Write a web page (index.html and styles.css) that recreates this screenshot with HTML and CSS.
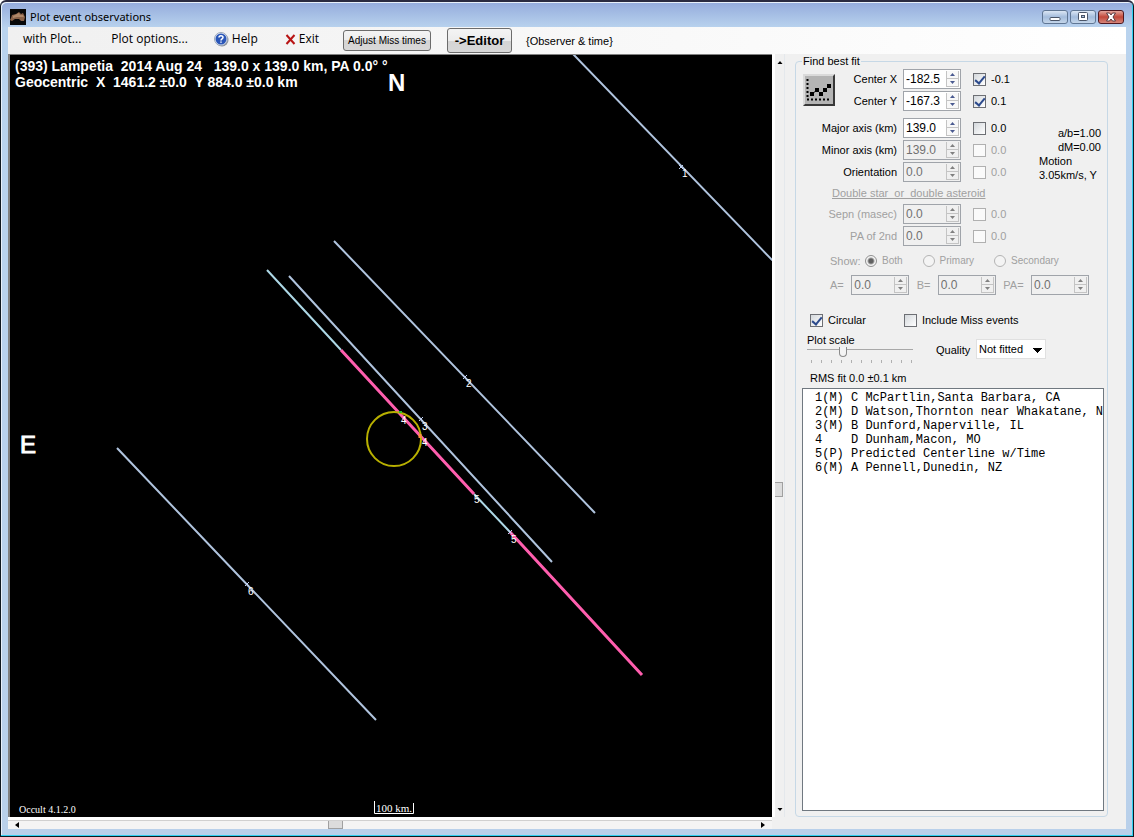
FILE: index.html
```html
<!DOCTYPE html>
<html lang="en">
<head>
<meta charset="utf-8">
<title>Plot event observations</title>
<link rel="stylesheet" href="styles.css">
</head>
<body>
<svg class="defs" width="0" height="0" aria-hidden="true">
  <symbol id="up" viewBox="0 0 5 3"><path d="M0 3 2.500 0 5 3z" fill="currentColor"/></symbol>
  <symbol id="down" viewBox="0 0 5 3"><path d="M0 0 2.500 3 5 0z" fill="currentColor"/></symbol>
</svg>
<div class="window">
  <header class="titlebar">
    <svg class="app-icon" viewBox="0 0 16 16"><rect width="16" height="16" fill="#080808"/><path d="M1 9 2 6l4-1 3-2 2 2 2-1 2 4-1 4-3 0-2-2-4 0-3 2-2-1z" fill="#8a6248"/><path d="M3 7l4-2 2-1 1 2 3 0 1 2-3 0-4 0-4 1z" fill="#b08868"/></svg>
    <h1>Plot event observations</h1>
    <div class="win-buttons">
      <button aria-label="Minimize"><svg width="12" height="12"><rect x="1" y="6.500" width="10" height="3" rx="1" fill="#fff" stroke="#4a5568"/></svg></button>
      <button aria-label="Restore"><svg width="12" height="12"><rect x="1.500" y="1.500" width="9" height="8" rx="1" fill="#fff" stroke="#4a5568"/><rect x="4.500" y="4.500" width="3" height="2" fill="#a9bfdd" stroke="#4a5568"/></svg></button>
      <button class="close" aria-label="Close"><svg width="12" height="12"><path d="M1.500 2h3L6 4l1.500-2h3L8 6l2.500 4h-3L6 8l-1.500 2h-3L4 6z" fill="#fff" stroke="#5a3a40"/></svg></button>
    </div>
  </header>

  <nav class="toolbar">
    <button class="menu">with Plot...</button>
    <button class="menu options">Plot options...</button>
    <button class="menu help"><svg width="15" height="15" viewBox="0 0 15 15"><circle cx="8" cy="8" r="6.500" fill="#8a9098"/><circle cx="7" cy="7" r="6.500" fill="#e6ecf6" stroke="#9aa6b8"/><circle cx="7" cy="7" r="5.500" fill="#2a56b8"/><path d="M5 5.500C5 3.200 9 3.200 9 5.400 9 6.800 7 6.800 7 8.400M7 9.500v1.300" fill="none" stroke="#fff" stroke-width="1.500"/></svg>Help</button>
    <button class="menu exit"><svg width="11" height="11" viewBox="0 0 11 11"><path d="M1.500 1 9.500 10M9.500 1 1.500 10" stroke="#b81414" stroke-width="2"/></svg>Exit</button>
    <button class="push adjust">Adjust Miss times</button>
    <button class="push editor">-&gt;Editor</button>
    <span class="note">{Observer &amp; time}</span>
  </nav>

  <main class="work">
    <section class="plot-area" aria-label="Plot">
      <svg class="plot">
        <g transform="translate(-10 -55)">
          <g class="chord">
            <path d="M573 54 774 262M334 241 595 513M289 276 552 562M117 448 376 720"/>
            <path class="cyan" d="M267 270 341 350M474 494 510 532"/>
            <path class="pink" d="M341 350 474 494M510 532 642 675"/>
          </g>
          <circle class="body" cx="394" cy="439" r="27"/>
          <path d="M399 412h3" stroke="#30c030" stroke-width="2"/>
          <path d="M420 434v4" stroke="#ff9040" stroke-width="3"/>
          <path class="mark" d="M679 165l4 4m0-4-4 4M463 375l4 4m0-4-4 4M419 417l4 4m0-4-4 4M245 582l4 4m0-4-4 4M508 530l4 4m0-4-4 4"/>
          <g class="num">
            <text x="682" y="177">1</text><text x="466" y="387">2</text><text x="422" y="430">3</text>
            <text x="401" y="424">4</text><text x="422" y="446">4</text><text x="474" y="503">5</text>
            <text x="511" y="543">5</text><text x="248" y="595">6</text>
          </g>
          <g class="info">
            <text x="15" y="71">(393) Lampetia  2014 Aug 24   139.0 x 139.0 km, PA 0.0° °</text>
            <text x="15" y="87">Geocentric  X  1461.2 ±0.0  Y 884.0 ±0.0 km</text>
          </g>
          <g class="compass"><text x="388" y="91">N</text><text class="east" x="20" y="453">E</text></g>
          <text class="version" x="19" y="813">Occult 4.1.2.0</text>
          <text class="scale" x="376" y="812">100 km.</text>
          <path d="M374.500 801v12.500h39V803" fill="none" stroke="#fff"/>
        </g>
      </svg>
    </section>

    <div class="vscroll">
      <button aria-label="Scroll up"><svg width="6" height="3"><use href="#up"/></svg></button>
      <div class="vthumb"></div>
      <button aria-label="Scroll down"><svg width="6" height="3"><use href="#down"/></svg></button>
    </div>
    <div class="hscroll">
      <button aria-label="Scroll left"><svg width="4" height="6"><path d="M4 0 0 3l4 3z"/></svg></button>
      <div class="hthumb"></div>
      <button aria-label="Scroll right"><svg width="4" height="6"><path d="M0 0 4 3 0 6z"/></svg></button>
    </div>

    <fieldset class="fit">
      <legend>Find best fit</legend>
      <div class="params">
        <button class="chart" aria-label="Fit"><svg width="28" height="28" viewBox="0 0 28 28"><path d="M2.500 3v19" stroke="#000" stroke-width="2" stroke-dasharray="2 2"/><path d="M2 23.500h22" stroke="#000" stroke-width="2" stroke-dasharray="2 2"/><path d="M7 18 12 14l4 4 4-4 4-4" fill="none" stroke="#000"/><path d="M5 16h4v4H5zM10 12h4v4h-4zM14 16h4v4h-4zM18 12h4v4h-4zM22 8h4v4h-4z"/></svg></button>
        <label class="name short" for="cx">Center X</label>
        <span class="spin"><input id="cx" value="-182.5"><button aria-label="Up"><svg><use href="#up"/></svg></button><button aria-label="Down"><svg><use href="#down"/></svg></button></span>
        <label class="check"><input type="checkbox" checked>-0.1</label>

        <label class="name short" for="cy">Center Y</label>
        <span class="spin"><input id="cy" value="-167.3"><button aria-label="Up"><svg><use href="#up"/></svg></button><button aria-label="Down"><svg><use href="#down"/></svg></button></span>
        <label class="check"><input type="checkbox" checked>0.1</label>

        <div class="space"></div>

        <label class="name" for="maj">Major axis (km)</label>
        <span class="spin"><input id="maj" value="139.0"><button aria-label="Up"><svg><use href="#up"/></svg></button><button aria-label="Down"><svg><use href="#down"/></svg></button></span>
        <label class="check"><input type="checkbox">0.0</label>

        <label class="name" for="min">Minor axis (km)</label>
        <span class="spin"><input id="min" value="139.0" disabled><button aria-label="Up" disabled><svg><use href="#up"/></svg></button><button aria-label="Down" disabled><svg><use href="#down"/></svg></button></span>
        <label class="check off"><input type="checkbox" disabled>0.0</label>

        <label class="name" for="ori">Orientation</label>
        <span class="spin"><input id="ori" value="0.0" disabled><button aria-label="Up" disabled><svg><use href="#up"/></svg></button><button aria-label="Down" disabled><svg><use href="#down"/></svg></button></span>
        <label class="check off"><input type="checkbox" disabled>0.0</label>

        <div class="facts"><p class="right">a/b=1.00<br>dM=0.00</p><p>Motion<br>3.05km/s, Y</p></div>

        <div class="double">Double star&nbsp; or&nbsp; double asteroid</div>

        <label class="name off" for="sep">Sepn (masec)</label>
        <span class="spin"><input id="sep" value="0.0" disabled><button aria-label="Up" disabled><svg><use href="#up"/></svg></button><button aria-label="Down" disabled><svg><use href="#down"/></svg></button></span>
        <label class="check off"><input type="checkbox" disabled>0.0</label>

        <label class="name off" for="pa2">PA of 2nd</label>
        <span class="spin"><input id="pa2" value="0.0" disabled><button aria-label="Up" disabled><svg><use href="#up"/></svg></button><button aria-label="Down" disabled><svg><use href="#down"/></svg></button></span>
        <label class="check off"><input type="checkbox" disabled>0.0</label>
      </div>

      <div class="show off">
        <span>Show:</span>
        <label><input type="radio" name="show" checked disabled>Both</label>
        <label><input type="radio" name="show" disabled>Primary</label>
        <label><input type="radio" name="show" disabled>Secondary</label>
      </div>

      <div class="axes off">
        <label for="a">A=</label>
        <span class="spin"><input id="a" value="0.0" disabled><button aria-label="Up" disabled><svg><use href="#up"/></svg></button><button aria-label="Down" disabled><svg><use href="#down"/></svg></button></span>
        <label for="b">B=</label>
        <span class="spin"><input id="b" value="0.0" disabled><button aria-label="Up" disabled><svg><use href="#up"/></svg></button><button aria-label="Down" disabled><svg><use href="#down"/></svg></button></span>
        <label for="pa">PA=</label>
        <span class="spin"><input id="pa" value="0.0" disabled><button aria-label="Up" disabled><svg><use href="#up"/></svg></button><button aria-label="Down" disabled><svg><use href="#down"/></svg></button></span>
      </div>

      <div class="flags">
        <label class="check"><input type="checkbox" checked>Circular</label>
        <label class="check"><input type="checkbox">Include Miss events</label>
      </div>

      <div class="tuning">
        <div class="zoom">
          <label for="zoom">Plot scale</label>
          <input id="zoom" type="range" min="0" max="100" value="33">
          <div class="ticks"></div>
        </div>
        <label class="quality-label" for="quality">Quality</label>
        <select id="quality" class="quality"><option>Not fitted</option></select>
      </div>

      <label class="rms" for="observers">RMS fit 0.0 ±0.1 km</label>
      <select id="observers" class="observers" size="6">
        <option>1(M)&nbsp;C&nbsp;McPartlin,Santa&nbsp;Barbara,&nbsp;CA</option>
        <option>2(M)&nbsp;D&nbsp;Watson,Thornton&nbsp;near&nbsp;Whakatane,&nbsp;NZ</option>
        <option>3(M)&nbsp;B&nbsp;Dunford,Naperville,&nbsp;IL</option>
        <option>4&nbsp;&nbsp;&nbsp;&nbsp;D&nbsp;Dunham,Macon,&nbsp;MO</option>
        <option>5(P)&nbsp;Predicted&nbsp;Centerline&nbsp;w/Time</option>
        <option>6(M)&nbsp;A&nbsp;Pennell,Dunedin,&nbsp;NZ</option>
      </select>
    </fieldset>
  </main>
</div>
</body>
</html>
```

FILE: styles.css
```css
* { box-sizing: border-box; }
body { margin: 0; font: 11px/14px "Liberation Sans", sans-serif; color: #000; }
button, input, select { font: inherit; color: inherit; margin: 0; padding: 0; border-radius: 0; }
button { border: 0; background: none; }
.defs { position: absolute; }

.window {
  display: flex; flex-direction: column; min-height: 100vh;
  padding: 1px 7px 7px; border: 1px solid #101820; border-top: 2px solid #2a2a40;
  border-radius: 6px 6px 0 0;
  background: linear-gradient(#94abdc, #b9d3ee 26px, #b9d0ea);
  box-shadow: inset -1px -1px 0 #30d0f0, inset 1px 1px 0 #e8f0fa;
}

/* Title bar */
.titlebar { display: flex; align-items: center; height: 24px; padding: 4px 2px 0; flex: none; }
.app-icon { width: 16px; height: 16px; margin-right: 4px; }
h1 { margin: 0; flex: 1; font: 11px/16px "Noto Sans", sans-serif; }
.win-buttons { display: flex; gap: 2px; }
.win-buttons button {
  display: grid; place-items: center; width: 26px; height: 14px;
  border: 1px solid #5f7694; border-radius: 3px; background: linear-gradient(#dbe6f4, #a3bcdc 50%, #c4d6ea);
}
.win-buttons .close { border-color: #501820; background: linear-gradient(#e4a69c, #c2483a 50%, #d6857a); }

/* Toolbar */
.toolbar { display: flex; align-items: center; height: 27px; flex: none; padding-left: 15px; background: linear-gradient(90deg, #f0f0f0, #fff); }
.menu { display: flex; align-items: center; gap: 3px; font: 12px/16px "Open Sans", sans-serif; padding-bottom: 3px; }
.options { margin-left: 30px; }
.help { margin-left: 26px; }
.exit { margin-left: 27px; }
.push { border: 1px solid #6c6c6c; border-radius: 3px; background: linear-gradient(#f4f4f4, #ececec 50%, #d4d4d4 50%, #d8d8d8); }
.adjust { width: 88px; height: 21px; margin-left: 24px; font-size: 10px; }
.editor { width: 65px; height: 25px; margin-left: 16px; font: bold 13px "Liberation Sans", sans-serif; }
.note { margin-left: 14px; }

/* Work area */
.work {
  flex: 1; display: grid; background: #f0f0f0;
  grid-template: minmax(0, 1fr) 12px / minmax(0, 1fr) 23px 331px;
}
.plot-area { border: solid #808080; border-width: 1px 0 0 2px; background: #000; min-height: 0; }
.plot { display: block; width: 100%; height: 100%; overflow: hidden; }
.chord path { fill: none; stroke: #b0c4de; stroke-width: 2; }
.chord .cyan { stroke: #add8e6; }
.chord .pink { stroke: #ff5eae; stroke-width: 3; }
.body { fill: none; stroke: #b8b000; stroke-width: 2; }
.mark { stroke: #c0d0f0; }
.plot text { fill: #fff; }
.num { font-size: 10px; }
.info { font-size: 14px; font-weight: bold; }
.info text { white-space: pre; }
.compass { font-size: 24px; font-weight: bold; }
.compass .east { font-weight: normal; stroke: #fff; }
.version { font: 10px "Liberation Serif", serif; }
.scale { font: 11px "Liberation Serif", serif; }

.vscroll { display: flex; flex-direction: column; margin-left: 3px; padding: 3px 0; width: 10px; box-shadow: -3px 0 0 #fff; border-right: 1px solid #e4e8ec; }
.hscroll { display: flex; grid-row: 2; grid-column: 1; margin-top: 3px; padding: 0 4px; border-top: 1px solid #d0d0d0; background: #f4f4f4; box-shadow: 0 -3px 0 #fff; }
.vscroll button, .hscroll button { display: grid; place-items: center; flex: none; }
.vscroll button { height: 10px; }
.hscroll button { width: 10px; }
.vthumb { height: 15px; width: 8px; margin: 415px 0 auto; border: 1px solid #a0a0a0; border-left: 0; background: #dcdcdc; }
.hthumb { width: 15px; margin: 0 auto 0 306px; border: 1px solid #a0a0a0; border-top: 0; background: #dcdcdc; }

/* Fit panel */
.fit {
  grid-column: 3; grid-row: 1; display: flex; flex-direction: column; min-width: 0; min-height: 0;
  margin: 0 18px 0 0; padding: 0 3px 5px 6px; border: 1px solid #c6d8e6; border-radius: 4px;
}
.fit legend { padding: 0 1px; }
.params { display: grid; grid-template-columns: 33px 68px 70px 66px 1fr; grid-template-rows: 22px 22px 5px 22px 22px 22px 20px 22px 22px; align-items: center; }
.chart {
  grid-row: 1 / 3; width: 32px; height: 32px; margin-left: 1px; display: grid; place-items: center;
  background: #b4b4b4; border: 2px solid; border-color: #dadada #383838 #383838 #dadada;
}
.name { grid-column: 1 / 3; text-align: right; padding-right: 6px; }
.name.short { grid-column: 2; }
.space { grid-column: 1 / -1; }
.spin { display: grid; grid-template: 8px 8px / 1fr 13px; width: 58px; height: 20px; padding: 1px; border: 1px solid #a0a4aa; background: #fff; }
.spin input { grid-row: 1 / 3; width: 100%; height: 15px; border: 0; background: transparent; padding-left: 1px; font-size: 12px; }
.spin button { grid-column: 2; display: grid; place-items: center; border: solid #c4c4c4; border-width: 0 1px 1px; background: #f8f8f8; color: #4a5a90; }
.spin svg { width: 5px; height: 3px; }
.spin:has(input:disabled) { background: #f0f0f0; }
.spin input:disabled { color: #707070; }
.spin button:disabled { color: #808080; background: #f0f0f0; }
.check { display: flex; align-items: center; gap: 5px; }
.check input { appearance: none; display: grid; place-items: center; width: 13px; height: 13px; border: 1px solid #6d6f74; background: linear-gradient(135deg, #d4d8dc, #fff); flex: none; }
.check input:checked::before { content: ""; width: 4px; height: 8px; border: solid #2c4a8c; border-width: 0 2px 2px 0; transform: rotate(40deg); margin-bottom: 2px; }
.check input:disabled { border-color: #b0b0b0; background: #fafafa; }
.off { color: #a0a0a0; }
.facts { grid-column: 5; grid-row: 4 / 7; width: 62px; padding-top: 7px; white-space: nowrap; }
.facts p { margin: 0; }
.facts .right { text-align: right; }
.double { grid-column: 1 / -1; padding-left: 30px; color: #a0a0a0; text-decoration: underline; }

.show { display: flex; align-items: center; height: 28px; padding-left: 28px; font-size: 10px; }
.show span { font-size: 11px; width: 35px; }
.show label { display: flex; align-items: center; gap: 5px; margin-right: 20px; }
.show input { appearance: none; width: 12px; height: 12px; border: 1px solid #b4b4b4; border-radius: 50%; background: #f4f4f4; }
.show input:checked { border-color: #909090; background: radial-gradient(circle, #606060 2px, #a0a0a0 3px, #f4f4f4 4px); }
.axes { display: flex; align-items: center; justify-content: space-between; height: 20px; padding: 0 15px 0 28px; }

.flags { display: flex; align-items: center; gap: 38px; padding-left: 8px; margin-top: 18px; height: 14px; }
.tuning { display: flex; align-items: flex-start; margin-top: 6px; padding-left: 5px; height: 32px; }
.zoom { display: flex; flex-direction: column; width: 108px; }
.zoom input { appearance: none; width: 106px; height: 10px; background: linear-gradient(#a8a8a8, #a8a8a8) 0 2px / 100% 1px no-repeat; }
.zoom input::-webkit-slider-thumb { appearance: none; width: 8px; height: 10px; border: 1px solid #8a8a8a; border-top: 0; border-radius: 0 0 4px 4px; background: #f4f4f4; }
.ticks { width: 101px; height: 3px; margin: 3px 0 0 4px; background: repeating-linear-gradient(90deg, #b0b0b0 0 1px, transparent 1px 10px); }
.quality-label { margin: 10px 0 0 21px; width: 40px; }
.quality {
  width: 70px; height: 20px; margin-top: 6px; padding: 0 2px; border: 1px solid #e0e0e0; appearance: none;
  background:
    linear-gradient(#000, #000) right 3px top 8px / 9px 1px no-repeat,
    linear-gradient(#000, #000) right 4px top 9px / 7px 1px no-repeat,
    linear-gradient(#000, #000) right 5px top 10px / 5px 1px no-repeat,
    linear-gradient(#000, #000) right 6px top 11px / 3px 1px no-repeat,
    linear-gradient(#000, #000) right 7px top 12px / 1px 1px no-repeat, #fff;
}
.rms { margin: 6px 0 3px 8px; }
.observers {
  flex: 1; min-height: 0; width: 100%; padding: 2px 0 0 12px; overflow: hidden; appearance: none;
  border: 1px solid #707880; background: #fff; font: 12px/14px "Liberation Mono", monospace;
}
.observers option { padding: 0; min-height: 14px; }
```
